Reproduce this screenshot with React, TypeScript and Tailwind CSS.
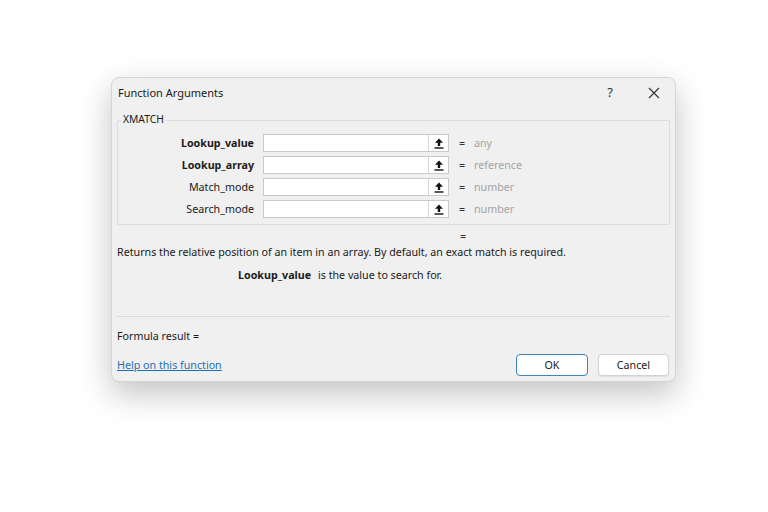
import React from "react";

const font = { fontFamily: '"Noto Sans", "Open Sans", sans-serif' };

function UpIcon() {
  return (
    <svg width="10" height="11" viewBox="0 0 10 11">
      <path d="M5 0.5 L9 4.8 L6.2 4.8 L6.2 8 L3.8 8 L3.8 4.8 L1 4.8 Z" fill="#111" />
      <rect x="0.5" y="9.3" width="9" height="1.4" fill="#111" />
    </svg>
  );
}

function Row({ label, bold, value }: { label: string; bold?: boolean; value: string }) {
  return (
    <div className="flex items-center h-[18px]">
      <div className={`w-[145px] text-right pr-[9px] text-[10.7px] text-[#1a1a1a] ${bold ? "font-bold" : ""}`}>{label}</div>
      <div className="w-[186px] h-[18px] bg-white border border-[#c9c9c9] flex justify-end">
        <div className="w-[20px] h-full border-l border-[#d6d6d6] flex items-center justify-center bg-white">
          <UpIcon />
        </div>
      </div>
      <div className="ml-[10px] w-[10px] text-[10.7px] text-[#333]">=</div>
      <div className="ml-[5px] text-[10.7px] text-[#a3a3a3]">{value}</div>
    </div>
  );
}

export default function App() {
  return (
    <div className="w-[768px] h-[512px] bg-white overflow-hidden" style={font}>
      <div className="ml-[111px] mt-[77px] w-[565px] h-[305px] bg-[#f0f0f0] border border-[#d4d4d4] rounded-[8px] shadow-[0_12px_32px_rgba(0,0,0,0.24)] flex flex-col">
        <div className="h-[29px] flex items-center pl-[6px] pr-[15px] shrink-0">
          <div className="text-[11px] text-[#1a1a1a] flex-1 pt-[1px]">Function Arguments</div>
          <div className="w-[20px] text-center text-[13px] text-[#333] mr-[28px]">?</div>
          <svg width="12" height="12" viewBox="0 0 12 12">
            <path d="M1 1 L11 11 M11 1 L1 11" stroke="#333" strokeWidth="1.1" />
          </svg>
        </div>
        <div className="px-[5px] mt-[13px]">
          <div className="relative border border-[#dcdcdc] rounded-[2px] h-[105px] pt-[13px] flex flex-col gap-[4px]">
            <div className="absolute -top-[9px] left-[3px] px-[2px] bg-[#f0f0f0] text-[10.3px] text-[#1a1a1a]">XMATCH</div>
            <Row label="Lookup_value" bold value="any" />
            <Row label="Lookup_array" bold value="reference" />
            <Row label="Match_mode" value="number" />
            <Row label="Search_mode" value="number" />
          </div>
        </div>
        <div className="pl-[348px] h-[18px] mt-[2px] text-[10.7px] text-[#333] leading-[18px]">=</div>
        <div className="pl-[5px] h-[18px] text-[10.7px] text-[#1a1a1a] leading-[18px] mt-[-2px]">
          Returns the relative position of an item in an array. By default, an exact match is required.
        </div>
        <div className="pl-[126px] h-[18px] mt-[5px] text-[10.7px] text-[#1a1a1a] leading-[18px] flex">
          <span className="font-bold w-[80px]">Lookup_value</span>
          <span>is the value to search for.</span>
        </div>
        <div className="mx-[5px] mt-[32px] border-t border-[#dadada]" />
        <div className="pl-[5px] mt-[10px] h-[18px] text-[10.7px] text-[#1a1a1a] leading-[18px]">Formula result =</div>
        <div className="flex items-center pl-[5px] pr-[6px] mt-[9px]">
          <div className="flex-1 text-[10.7px] text-[#1f6fb5] underline leading-[18px]">Help on this function</div>
          <div className="w-[72px] h-[22px] bg-white border border-[#3f84bb] rounded-[4px] flex items-center justify-center text-[10.7px] text-[#1a1a1a]">OK</div>
          <div className="ml-[10px] w-[71px] h-[22px] bg-white border border-[#d3d3d3] rounded-[4px] shadow-[0_1px_1px_rgba(0,0,0,0.08)] flex items-center justify-center text-[10.7px] text-[#1a1a1a]">Cancel</div>
        </div>
      </div>
    </div>
  );
}
